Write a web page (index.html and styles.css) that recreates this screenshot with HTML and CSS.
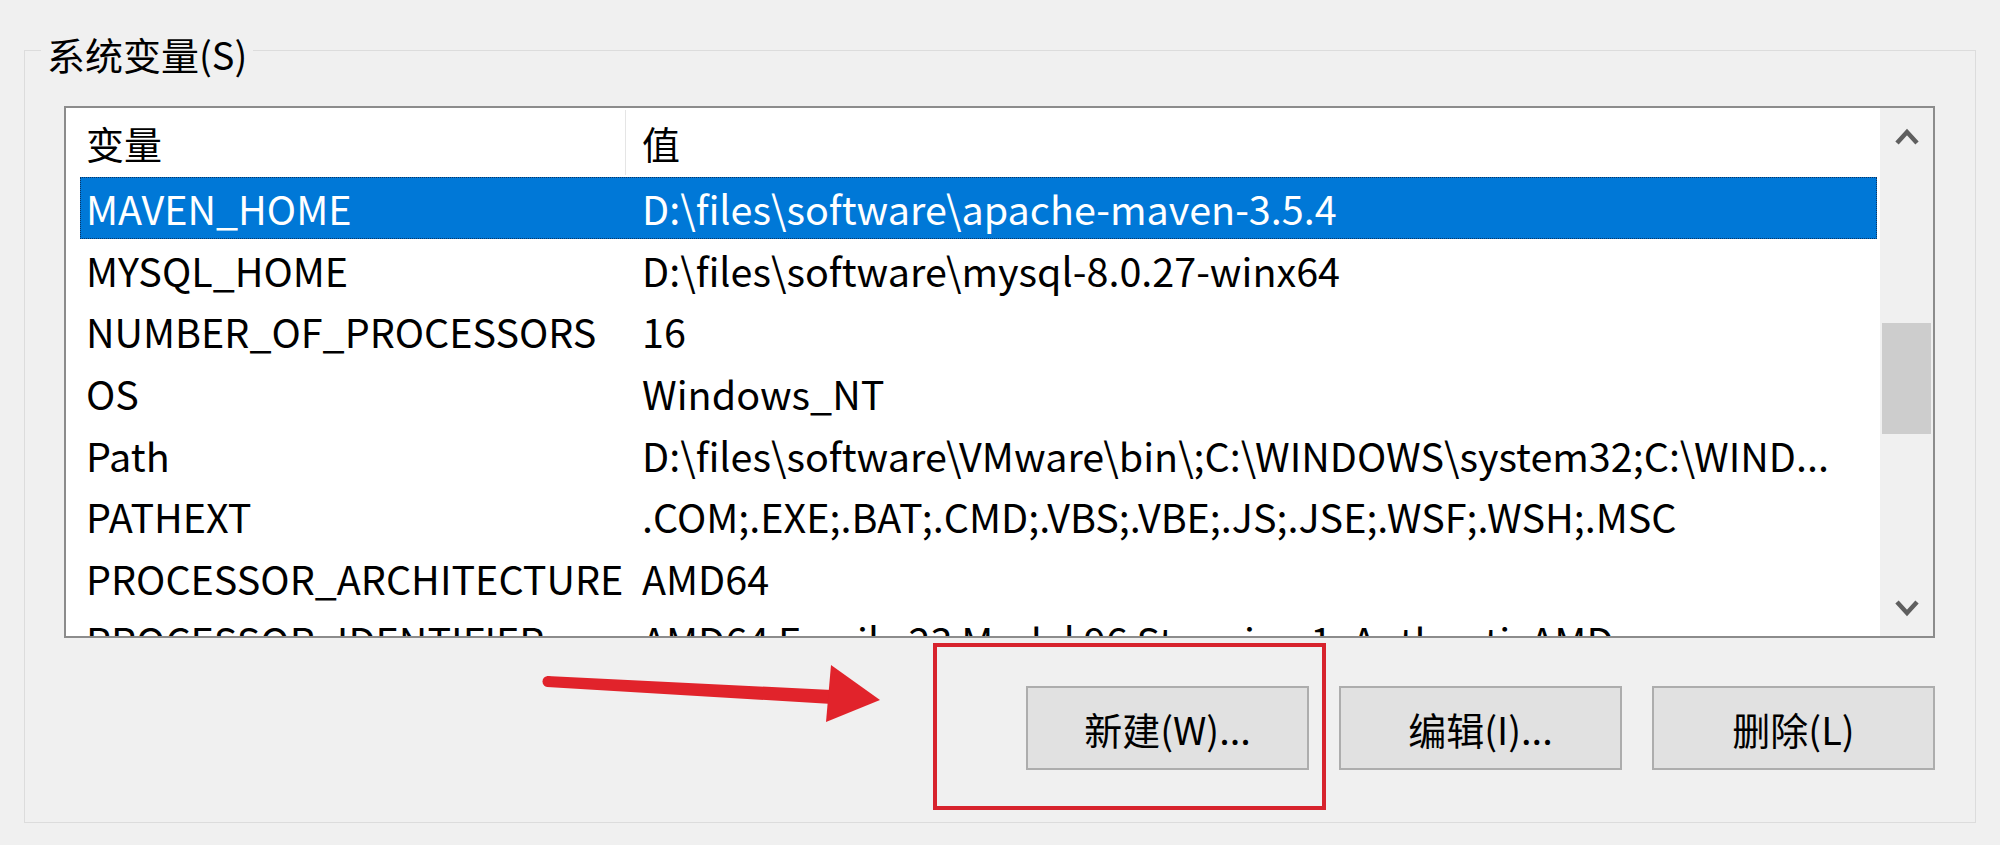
FILE: index.html
```html
<!DOCTYPE html>
<html lang="zh-CN">
<head>
<meta charset="utf-8">
<title>系统变量</title>
<link rel="stylesheet" href="styles.css">
</head>
<body>
<div class="page">
  <fieldset class="group">
    <legend class="group-title">系统变量(S)</legend>
    <div class="list">
      <div class="list-main">
        <div class="list-head">
          <div class="hcell hname">变量</div>
          <div class="hsep"></div>
          <div class="hcell hvalue">值</div>
        </div>
        <div class="list-body">
          <div class="row selected"><span class="cell name">MAVEN_HOME</span><span class="cell value">D:\files\software\apache-maven-3.5.4</span></div>
          <div class="row"><span class="cell name">MYSQL_HOME</span><span class="cell value">D:\files\software\mysql-8.0.27-winx64</span></div>
          <div class="row"><span class="cell name">NUMBER_OF_PROCESSORS</span><span class="cell value">16</span></div>
          <div class="row"><span class="cell name">OS</span><span class="cell value">Windows_NT</span></div>
          <div class="row"><span class="cell name">Path</span><span class="cell value">D:\files\software\VMware\bin\;C:\WINDOWS\system32;C:\WIND...</span></div>
          <div class="row"><span class="cell name">PATHEXT</span><span class="cell value">.COM;.EXE;.BAT;.CMD;.VBS;.VBE;.JS;.JSE;.WSF;.WSH;.MSC</span></div>
          <div class="row"><span class="cell name">PROCESSOR_ARCHITECTURE</span><span class="cell value">AMD64</span></div>
          <div class="row"><span class="cell name">PROCESSOR_IDENTIFIER</span><span class="cell value">AMD64 Family 23 Model 96 Stepping 1, AuthenticAMD</span></div>
        </div>
      </div>
      <div class="scrollbar">
        <div class="sb-btn">
          <svg width="26" height="18" viewBox="0 0 26 18"><polyline points="3,15 13,4 23,15" fill="none" stroke="#5f5f5f" stroke-width="4.5"/></svg>
        </div>
        <div class="sb-track"><div class="sb-thumb"></div></div>
        <div class="sb-btn">
          <svg width="26" height="18" viewBox="0 0 26 18"><polyline points="3,3 13,14 23,3" fill="none" stroke="#5f5f5f" stroke-width="4.5"/></svg>
        </div>
      </div>
    </div>
    <div class="buttons">
      <button class="btn">新建(W)...</button>
      <button class="btn">编辑(I)...</button>
      <button class="btn">删除(L)</button>
    </div>
  </fieldset>
  <div class="callout"></div>
  <svg class="arrow" width="2000" height="845" viewBox="0 0 2000 845">
    <polygon points="547,676 832,690 832,704 547,687" fill="#e1232b"/>
    <circle cx="548" cy="681.5" r="5.5" fill="#e1232b"/>
    <polygon points="831,665 880,700 826,722" fill="#e1232b"/>
  </svg>
</div>
</body>
</html>
```

FILE: styles.css
```css
html, body {
  margin: 0;
  padding: 0;
}
body {
  width: 2000px;
  height: 845px;
  overflow: hidden;
  background: #f0f0f0;
  font-family: "Noto Sans CJK SC", "Noto Sans", sans-serif;
  font-size: 38px;
  color: #000;
}
.page {
  position: relative;
  width: 2000px;
  height: 845px;
  box-sizing: border-box;
  padding: 26px 0 0 24px;
}
.group {
  margin: 0;
  width: 1952px;
  box-sizing: border-box;
  border: 1px solid #dcdcdc;
  padding: 0 40px 52px 16px;
  min-width: 0;
}
.group-title {
  padding: 8px 6px 0;
  line-height: 40px;
  color: #000;
}
.list {
  margin: 32px 0 0 23px;
  height: 532px;
  box-sizing: border-box;
  border: 2px solid #8c8c8c;
  background: #fff;
  display: flex;
  overflow: hidden;
}
.list-main {
  flex: 1;
  min-width: 0;
  display: flex;
  flex-direction: column;
  overflow: hidden;
}
.list-head {
  height: 69px;
  flex: none;
  display: flex;
  align-items: stretch;
}
.hcell {
  line-height: 69px;
  white-space: nowrap;
}
.hname {
  width: 539px;
  padding-left: 20px;
}
.hvalue {
  padding-left: 16px;
}
.hsep {
  width: 1px;
  margin: 2px 0;
  background: #e5e5e5;
}
.list-body {
  flex: 1;
  overflow: hidden;
}
.row {
  height: 61.7px;
  margin: 0 3px 0 14px;
  box-sizing: border-box;
  display: grid;
  grid-template-columns: 545px 1fr;
  font-size: 39.5px;
  line-height: 61.7px;
  white-space: nowrap;
}
.cell {
  overflow: visible;
}
.name {
  padding-left: 6px;
}
.value {
  padding-left: 17px;
}
.row.selected {
  background: #0078d7;
  color: #fff;
  outline: 1px dotted #0c3563;
  outline-offset: -1px;
}
.scrollbar {
  width: 53px;
  flex: none;
  background: #f0f0f0;
  display: flex;
  flex-direction: column;
}
.sb-btn {
  height: 57px;
  flex: none;
  display: flex;
  align-items: center;
  justify-content: center;
}
.sb-track {
  flex: 1;
}
.sb-thumb {
  margin: 158px 2px 0;
  height: 111px;
  background: #cdcdcd;
}
.buttons {
  margin-top: 48px;
  display: flex;
  justify-content: flex-end;
  gap: 30px;
}
.btn {
  width: 283px;
  height: 84px;
  box-sizing: border-box;
  border: 2px solid #adadad;
  background: #e1e1e1;
  font: inherit;
  font-size: 38px;
  color: #000;
  padding: 0;
  margin: 0;
  border-radius: 0;
}
.callout {
  position: absolute;
  left: 933px;
  top: 643px;
  width: 393px;
  height: 167px;
  box-sizing: border-box;
  border: 4px solid #d7232d;
}
.arrow {
  position: absolute;
  left: 0;
  top: 0;
  pointer-events: none;
}
```
